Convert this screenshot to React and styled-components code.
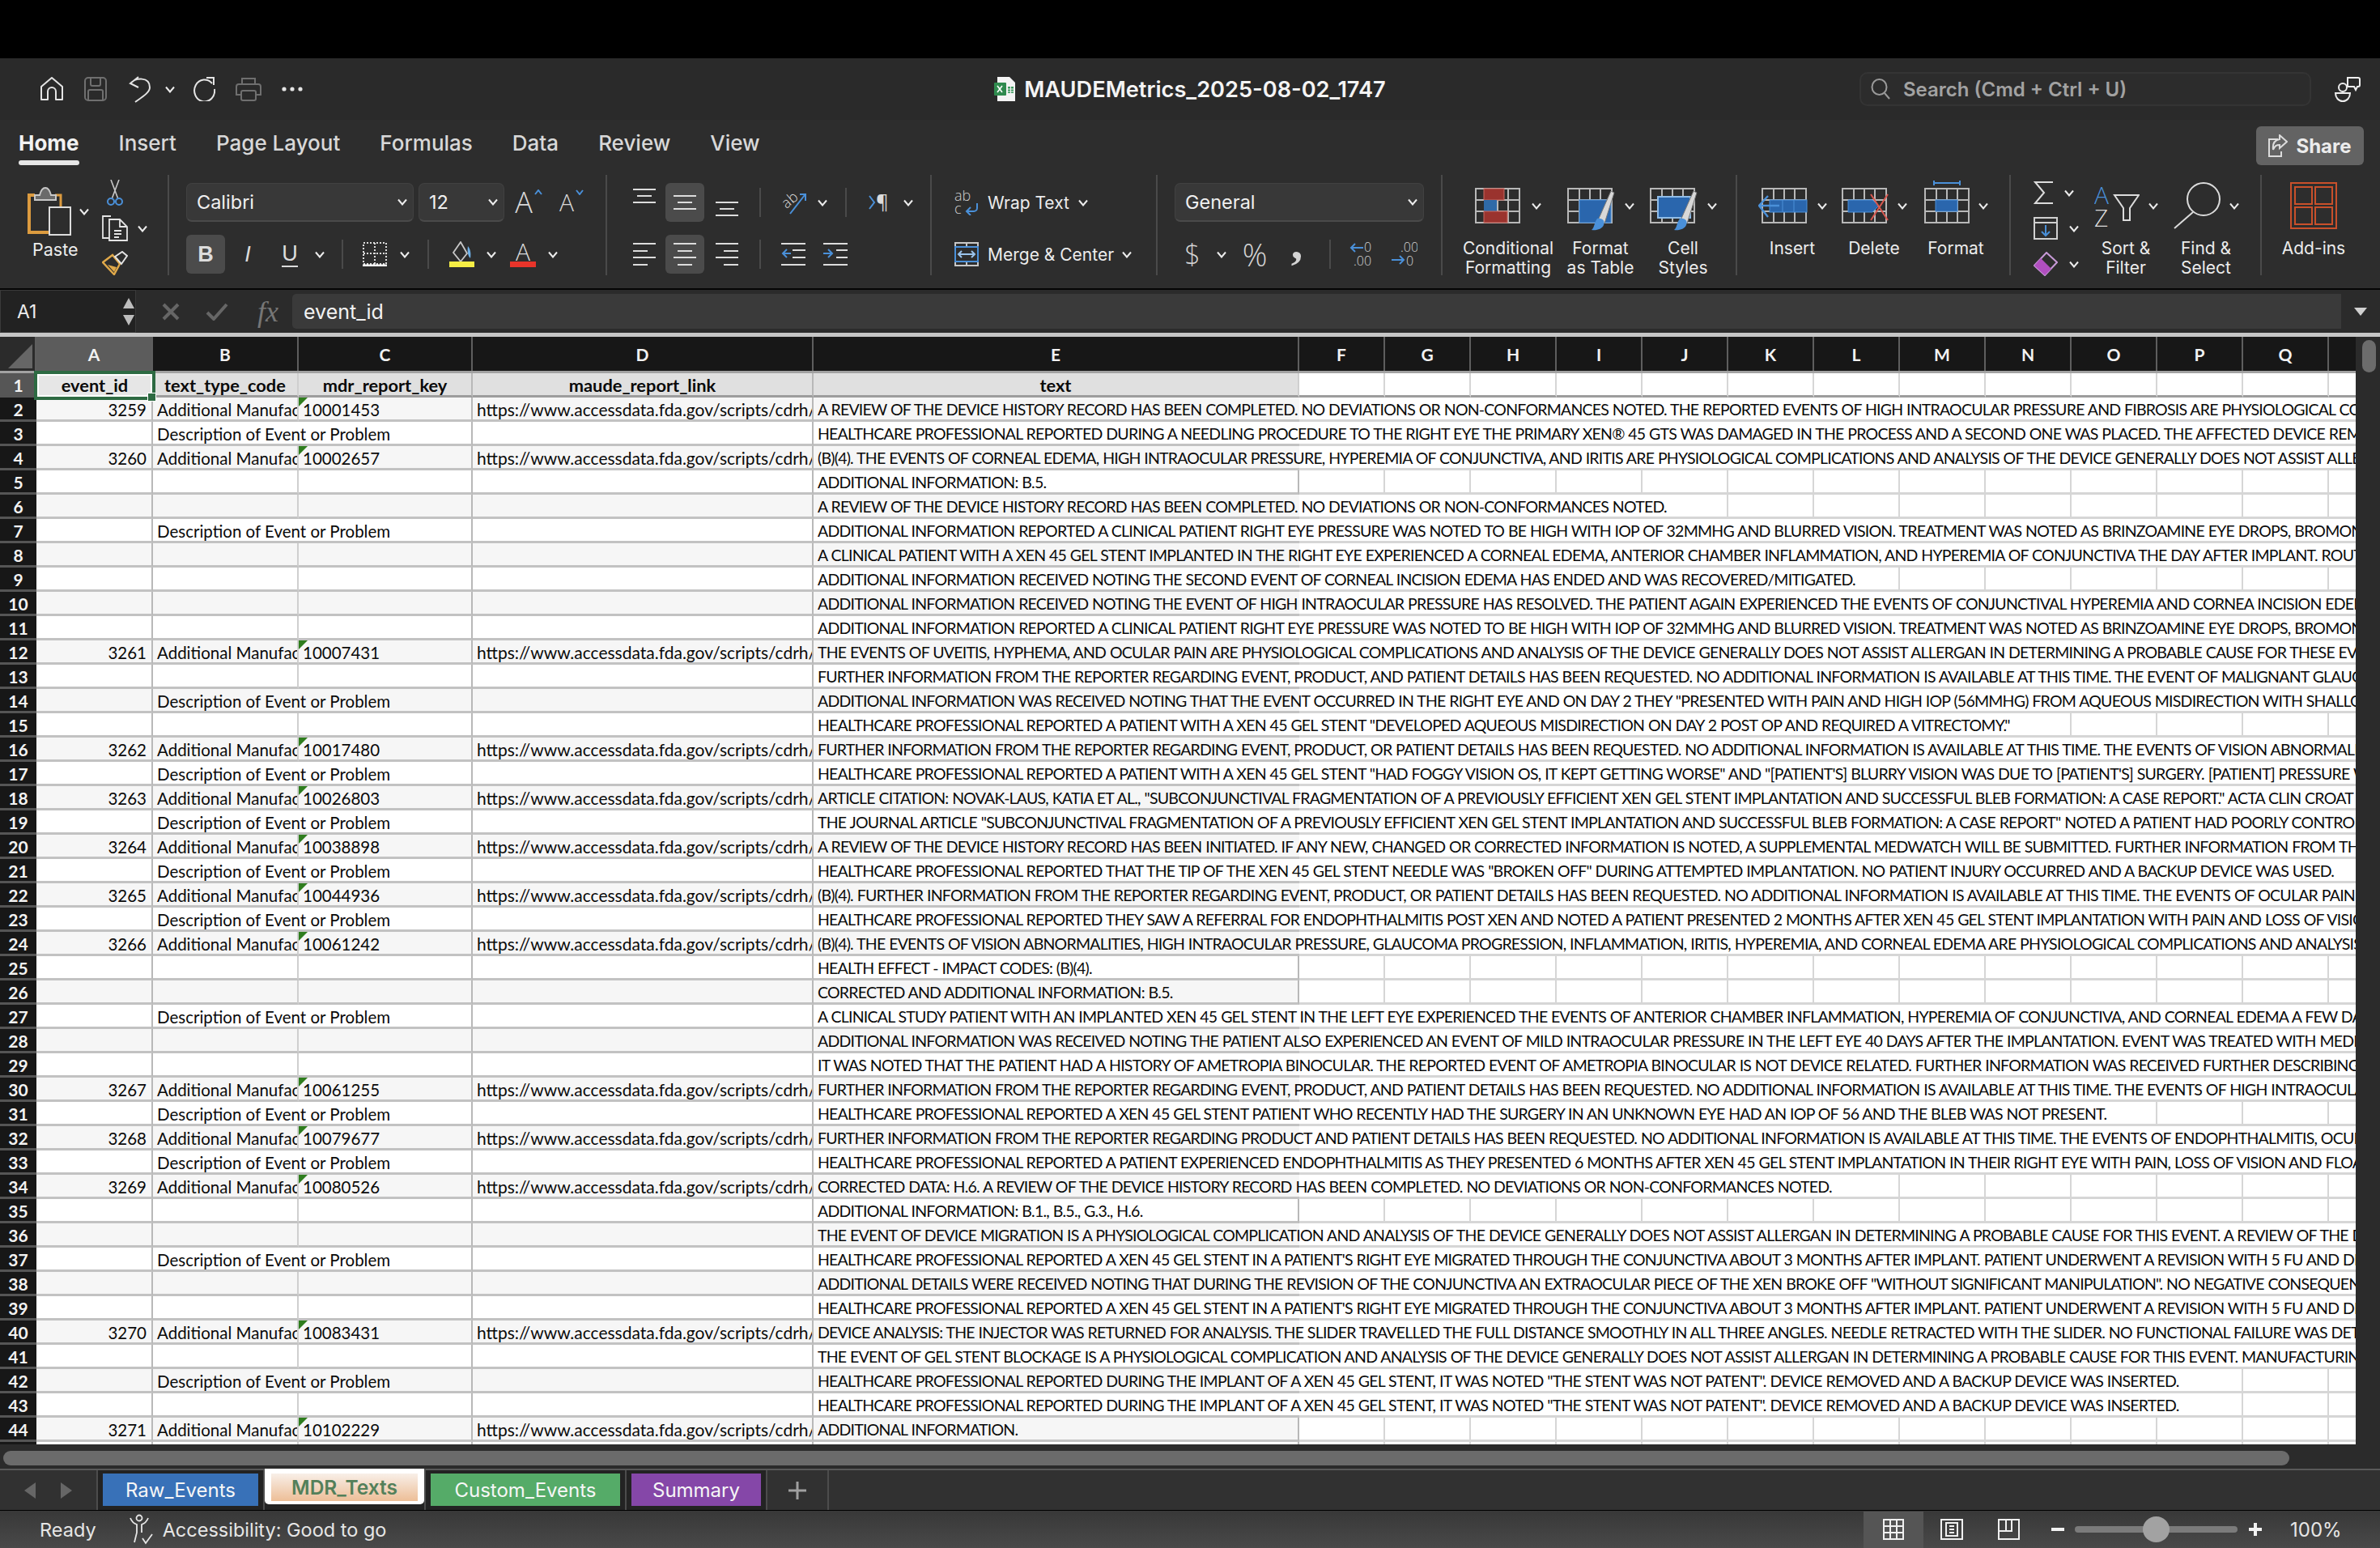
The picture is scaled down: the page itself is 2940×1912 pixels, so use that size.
import React from 'react';
import styled, { createGlobalStyle } from 'styled-components';

const GlobalStyle = createGlobalStyle`
  html, body { margin: 0; padding: 0; background: #000; }
  * { box-sizing: border-box; }
`;

const UI = `Inter, "Liberation Sans", sans-serif`;
const SHEET = `Lato, "Open Sans", sans-serif`;

const Page = styled.div`
  width: 2940px;
  height: 1912px;
  display: flex;
  flex-direction: column;
  overflow: hidden;
  background: #2b2b2b;
  font-family: ${UI};
  color: #f0f0f0;
`;

const BlackBand = styled.div`
  height: 72px;
  background: #000;
  flex-shrink: 0;
`;

const TitleBar = styled.header`
  height: 76px;
  flex-shrink: 0;
  background: #2a2a2a;
  display: grid;
  grid-template-columns: 1fr auto 1fr;
  align-items: center;
  padding: 0 24px;
`;

const QuickTools = styled.div`
  display: flex;
  align-items: center;
  padding-left: 26px;
`;

const QuickSlot = styled.div`
  width: ${p => p.$w}px;
  display: flex;
  align-items: center;
`;

const DocTitle = styled.div`
  display: flex;
  align-items: center;
  gap: 11px;
  font-size: 27.200px;
  font-weight: 600;
  color: #f4f4f4;
  white-space: nowrap;
`;

const SearchArea = styled.div`
  display: flex;
  justify-content: flex-end;
  align-items: center;
  gap: 29px;
`;

const SearchBox = styled.div`
  width: 558px;
  height: 42px;
  border: 2px solid #343434;
  border-radius: 10px;
  background: #2c2c2c;
  display: flex;
  align-items: center;
  gap: 16px;
  padding-left: 12px;
  font-size: 24px;
  font-weight: 600;
  color: #a2a2a2;
`;

const Ribbon = styled.section`
  height: 208px;
  flex-shrink: 0;
  background: #2d2d2d;
`;

const RibbonTabs = styled.nav`
  height: 68px;
  display: flex;
  justify-content: space-between;
  padding: 8px 20px 0 23px;
`;

const TabList = styled.div`
  display: flex;
  gap: 49px;
`;

const RibbonTab = styled.div`
  position: relative;
  height: 48px;
  padding-top: 6px;
  font-size: 26px;
  line-height: 30px;
  font-weight: ${p => (p.$active ? 700 : 500)};
  color: ${p => (p.$active ? '#f2f2f2' : '#d8d8d8')};
  white-space: nowrap;
  &::after {
    content: '';
    display: ${p => (p.$active ? 'block' : 'none')};
    position: absolute;
    left: 0;
    right: 0;
    bottom: 0;
    height: 6px;
    border-radius: 3px;
    background: #e6e6e6;
  }
`;

const ShareButton = styled.button`
  width: 133px;
  height: 48px;
  border: none;
  border-radius: 6px;
  background: #636363;
  color: #ececec;
  font: 700 24px ${UI};
  display: flex;
  align-items: center;
  justify-content: center;
  gap: 10px;
`;

const ToolStrip = styled.div`
  display: flex;
  height: 124px;
`;

const Group = styled.div`
  width: ${p => p.$w}px;
  flex-shrink: 0;
  height: 124px;
  padding-left: ${p => p.$pad}px;
  display: flex;
  border-right: ${p => (p.$last ? 'none' : '2px solid #4a4a4a')};
`;

const Stack = styled.div`
  display: flex;
  flex-direction: column;
  gap: 16px;
  padding-top: 10px;
`;

const ToolRow = styled.div`
  display: flex;
  align-items: center;
  height: 48px;
`;

const Tool = styled.div`
  width: ${p => p.$w}px;
  height: 48px;
  flex-shrink: 0;
  display: flex;
  align-items: center;
  justify-content: center;
  border-radius: 6px;
  background: ${p => (p.$active ? '#4b4b4b' : 'transparent')};
`;

const VSep = styled.div`
  width: ${p => p.$w}px;
  height: 36px;
  flex-shrink: 0;
  display: flex;
  justify-content: center;
  &::before {
    content: '';
    width: 2px;
    background: #4a4a4a;
  }
`;

const PasteBlock = styled.div`
  width: 96px;
  display: flex;
  flex-direction: column;
  align-items: flex-start;
`;

const PasteTop = styled.div`
  display: flex;
  align-items: center;
  gap: 10px;
  height: 70px;
  margin-top: 10px;
`;

const PasteLabel = styled.div`
  margin: 0 0 0 6px;
  font-size: 21.500px;
  line-height: 24px;
  color: #ececec;
`;

const MiniColumn = styled.div`
  display: flex;
  flex-direction: column;
  align-items: flex-start;
  gap: 12px;
  padding-top: 6px;
  margin-left: -4px;
`;

const MiniRow = styled.div`
  display: flex;
  align-items: center;
  gap: 12px;
  height: 32px;
  padding-left: ${p => p.$inset || 0}px;
`;

const Select = styled.div`
  width: ${p => p.$w}px;
  height: 48px;
  flex-shrink: 0;
  margin-right: ${p => p.$gap || 0}px;
  padding: 0 7px 0 12px;
  border-radius: 7px;
  background: #383838;
  border: 1px solid #414141;
  border-bottom: 2px solid #4a4a4a;
  display: flex;
  align-items: center;
  justify-content: space-between;
  font-size: 23.500px;
  color: #f0f0f0;
`;

const LetterA = styled.span`
  font: 300 ${p => p.$size}px "Open Sans", sans-serif;
  color: #d8d8d8;
  line-height: 1;
`;

const CaretSlot = styled.span`
  align-self: flex-start;
  margin: 8px 0 0 2px;
`;

const StyleLetter = styled.span`
  font-family: "Liberation Sans", sans-serif;
  font-size: 27px;
  font-weight: ${p => (p.$bold ? 700 : 300)};
  font-style: ${p => (p.$italic ? 'italic' : 'normal')};
  color: #dcdcdc;
  border-bottom: ${p => (p.$under ? '2px solid #dcdcdc' : 'none')};
  line-height: 30px;
`;

const NumberGlyph = styled.span`
  font-family: "Open Sans", sans-serif;
  font-size: ${p => p.$size}px;
  font-weight: 300;
  color: #d4d4d4;
`;

const CommaGlyph = styled.span`
  font: 700 58px "Liberation Serif", serif;
  line-height: 48px;
  color: #d4d4d4;
  transform: translateY(-14px);
`;

const WideLabel = styled.span`
  font-size: 21px;
  color: #ececec;
  white-space: nowrap;
  margin: 0 ${p => p.$after}px 0 4px;
`;

const BigTool = styled.div`
  width: ${p => p.$w}px;
  flex-shrink: 0;
  display: flex;
  flex-direction: column;
  align-items: center;
`;

const BigIconRow = styled.div`
  height: 76px;
  flex-shrink: 0;
  display: flex;
  align-items: center;
  gap: ${p => p.$gap || 11}px;
`;

const BigLabel = styled.div`
  font-size: 21px;
  line-height: 24px;
  margin-top: 3px;
  flex-shrink: 0;
  color: #ececec;
  text-align: center;
  white-space: nowrap;
`;

const EditColumn = styled.div`
  width: 70px;
  flex-shrink: 0;
  display: flex;
  flex-direction: column;
  padding: 8px 0 0 6px;
  gap: 16px;
`;

const EditRow = styled.div`
  display: flex;
  align-items: center;
  gap: 14px;
  height: 28px;
`;

const FormulaBar = styled.div`
  height: 60px;
  flex-shrink: 0;
  border-top: 2px solid #050505;
  border-bottom: 5px solid #c6c6c6;
  background: #2b2b2b;
  display: flex;
  align-items: stretch;
`;

const NameBox = styled.div`
  width: 168px;
  background: #222;
  border: 1px solid #3a3a3a;
  display: flex;
  align-items: center;
  justify-content: space-between;
  padding: 0 0 0 20px;
  font-size: 23px;
  color: #ececec;
`;

const FormulaActions = styled.div`
  width: 193px;
  display: flex;
  align-items: center;
  padding-left: 32px;
  gap: 32px;
`;

const FxMark = styled.span`
  font: italic 36px "Liberation Serif", serif;
  color: #767676;
  margin-left: 4px;
`;

const FormulaInput = styled.div`
  flex: 1;
  margin: 5px 0;
  background: #3a3a3a;
  border-radius: 5px 0 0 5px;
  display: flex;
  align-items: center;
  padding-left: 14px;
  font: 400 25px ${UI};
  color: #f2f2f2;
`;

const FormulaEnd = styled.div`
  width: 48px;
  display: flex;
  align-items: center;
  justify-content: center;
`;

const SheetArea = styled.div`
  height: 1368px;
  flex-shrink: 0;
  display: flex;
  background: #2b2b2b;
`;

const Sheet = styled.div`
  width: 2910px;
  overflow: hidden;
  background: #fff;
  font-family: ${SHEET};
  font-size: 20.500px;
  color: #0a0a0a;
`;

const HeaderRow = styled.div`
  display: flex;
  height: 45px;
  background: #171717;
  border-bottom: 3px solid #a2a2a2;
`;

const ColHead = styled.div`
  width: ${p => p.$w}px;
  flex-shrink: 0;
  display: flex;
  align-items: center;
  justify-content: center;
  background: ${p => (p.$selected ? '#5c5c5c' : '#171717')};
  border-right: 2px solid #5e5e5e;
  color: #f2f2f2;
  font-weight: 700;
  font-size: 21px;
`;

const Corner = styled.div`
  width: 45px;
  flex-shrink: 0;
  background: #2b2b2b;
  border-right: 2px solid #5e5e5e;
  display: flex;
  align-items: flex-end;
  justify-content: flex-end;
  padding: 0 3px 3px 0;
`;

const Row = styled.div`
  display: flex;
  height: 30px;
`;

const RowHead = styled.div`
  width: 45px;
  flex-shrink: 0;
  display: flex;
  align-items: center;
  justify-content: center;
  background: ${p => (p.$selected ? '#565656' : '#171717')};
  border-bottom: 3px solid #555;
  color: #f2f2f2;
  font-weight: 700;
  font-size: 21px;
  padding-top: 2px;
`;

const Cell = styled.div`
  position: relative;
  width: ${p => p.$w}px;
  flex-shrink: 0;
  padding: 0 ${p => (p.$num ? 6 : 5)}px 0 ${p => (p.$num ? 0 : 5)}px;
  line-height: 30px;
  white-space: nowrap;
  text-align: ${p => (p.$num ? 'right' : 'left')};
  overflow: ${p => (p.$clip ? 'hidden' : 'visible')};
  z-index: ${p => (p.$over ? 1 : 0)};
  background: ${p => (p.$band ? '#f6f6f6' : '#fff')};
  border-bottom: 3px solid #c2c2c2;
  border-right: ${p => (p.$line ? `2px solid ${p.$soft ? '#cfcfcf' : '#b8b8b8'}` : '0 none')};
`;

const Flagged = styled(Cell)`
  &::before {
    content: '';
    position: absolute;
    left: 0;
    top: 0;
    border-top: 11px solid #2f7d1e;
    border-right: 11px solid transparent;
  }
`;

const LinkCell = styled(Cell)`
  font-size: 21px;
`;

const TextCell = styled(Cell)`
  font-size: 19.500px;
  letter-spacing: -0.77px;
  word-spacing: 0.5px;
`;

const HeadCell = styled(Cell)`
  background: #e0e0e0;
  font-size: 21.800px;
  font-weight: 700;
  text-align: center;
  padding: 0;
  border-bottom-color: #9d9d9d;
`;

const ActiveCell = styled(HeadCell)`
  z-index: 3;
  background: #e6e6e6;
  border: none;
  outline: 4px solid #2d6a42;
  outline-offset: -1px;
  box-shadow: inset 0 0 0 3px #fff;
  &::after {
    content: '';
    position: absolute;
    right: -4px;
    bottom: -5px;
    width: 9px;
    height: 9px;
    background: #2d6a42;
    border: 1px solid #fff;
  }
`;

const BlankCell = styled.div`
  width: 106px;
  flex-shrink: 0;
  background: #fff;
  border-bottom: 3px solid ${p => (p.$first ? '#9d9d9d' : '#d6d6d6')};
  border-right: ${p => (p.$line ? '2px solid #d6d6d6' : '0 none')};
`;

const VScroll = styled.div`
  width: 30px;
  padding: 4px 5px 0 8px;
`;

const VThumb = styled.div`
  height: 40px;
  border-radius: 9px;
  background: #6c6c6c;
`;

const HScroll = styled.div`
  height: 30px;
  flex-shrink: 0;
  padding: 8px 0 0 4px;
  background: #2b2b2b;
`;

const HThumb = styled.div`
  width: 2824px;
  height: 18px;
  border-radius: 9px;
  background: #6b6b6b;
`;

const SheetTabs = styled.div`
  height: 52px;
  flex-shrink: 0;
  display: flex;
  background: #313131;
  border-top: 2px solid #595959;
  border-bottom: 1px solid #000;
`;

const NavArrows = styled.div`
  width: 121px;
  display: flex;
  align-items: center;
  gap: 31px;
  padding-left: 30px;
  border-right: 2px solid #4c4c4c;
`;

const TabSlot = styled.div`
  height: ${p => (p.$active ? 51 : 49)}px;
  margin-top: ${p => (p.$active ? -2 : 0)}px;
  padding: ${p => (p.$active ? '0' : '4px 6px 0')};
  background: #232323;
  border-right: 2px solid #4c4c4c;
`;

const SheetTab = styled.div`
  width: ${p => p.$w}px;
  height: 40px;
  display: flex;
  align-items: center;
  justify-content: center;
  background: ${p => p.$bg};
  color: #f6f6f6;
  font-size: 24px;
`;

const ActiveTab = styled.div`
  width: 197px;
  height: 44px;
  padding: 6px 8px 4px;
  background: #fff;
  border-radius: 0 0 5px 5px;
`;

const ActiveTabFace = styled.div`
  height: 100%;
  display: flex;
  align-items: center;
  justify-content: center;
  background: linear-gradient(#f8efe8, #edbe97);
  color: #54805a;
  font-size: 24.500px;
  font-weight: 600;
`;

const AddSheet = styled.div`
  width: 76px;
  display: flex;
  align-items: center;
  justify-content: center;
  border-right: 2px solid #4c4c4c;
`;

const StatusBar = styled.footer`
  flex: 1;
  display: flex;
  align-items: center;
  justify-content: space-between;
  padding-left: 49px;
  background: linear-gradient(#383838, #494949);
  font-size: 23.500px;
  color: #e6e6e6;
`;

const StatusLeft = styled.div`
  display: flex;
  align-items: center;
`;

const StatusItem = styled.div`
  display: flex;
  align-items: center;
  gap: 10px;
  margin-left: ${p => p.$left || 0}px;
`;

const StatusRight = styled.div`
  display: flex;
  align-items: center;
  height: 45px;
  padding-right: 49px;
`;

const ViewButton = styled.div`
  width: ${p => p.$w}px;
  height: 45px;
  display: flex;
  align-items: center;
  justify-content: ${p => (p.$end ? 'flex-end' : 'center')};
  background: ${p => (p.$active ? '#555' : 'transparent')};
`;

const ZoomTrack = styled.div`
  position: relative;
  width: 201px;
  height: 8px;
  margin: 0 14px 0 13px;
  border-radius: 4px;
  background: #7b7b7b;
`;

const ZoomThumb = styled.div`
  position: absolute;
  left: 84px;
  top: -12px;
  width: 33px;
  height: 32px;
  border-radius: 50%;
  background: #a2a2a2;
`;

const ZoomValue = styled.div`
  width: 62px;
  margin-left: 35px;
  font-size: 24px;
  white-space: nowrap;
`;

const Icon = styled.svg`
  display: block;
  flex-shrink: 0;
`;

const Chev = () => (
  <Icon width="12" height="9" viewBox="0 0 12 9" fill="none" stroke="#ececec" strokeWidth="2">
    <path d="M1 1.500 6 7.500 11 1.500" />
  </Icon>
);

const W = '#e4e4e4';
const G = '#c8c8c8';
const BL = '#4a90d9';
const FILL = '#2a66ad';
const DIM = '#6f6f6f';

const Caret = ({ down }) => (
  <Icon width="10" height="7" viewBox="0 0 10 7" fill="none" stroke={BL} strokeWidth="2">
    <path d={down ? 'M1 1 5 6 9 1' : 'M1 6 5 1 9 6'} />
  </Icon>
);
const HomeIcon = () => (
  <Icon width="28" height="30" viewBox="0 0 28 30" fill="none" stroke={W} strokeWidth="2">
    <path d="M1 28V12L14 1l13 11v16h-8V18a5 5 0 0 0-10 0v10Z" strokeLinejoin="round" />
  </Icon>
);
const SaveIcon = () => (
  <Icon width="28" height="30" viewBox="0 0 28 30" fill="none" stroke={DIM} strokeWidth="2">
    <rect x="1" y="1" width="26" height="28" rx="4" />
    <path d="M8 1v8a2 2 0 0 0 2 2h8a2 2 0 0 0 2-2V1M5 29V18a2 2 0 0 1 2-2h14a2 2 0 0 1 2 2v11" />
  </Icon>
);
const UndoIcon = () => (
  <Icon width="28" height="33" viewBox="0 0 28 33" fill="none" stroke={W} strokeWidth="2">
    <path d="M12 1 2 9l10 5M2 9c6-7 24-9 24 5 0 6-8 11-18 18" />
  </Icon>
);
const RedoIcon = () => (
  <Icon width="28" height="30" viewBox="0 0 28 30" fill="none" stroke={W} strokeWidth="2">
    <path d="M24 8A12.500 13.500 0 1 0 27 15M17 1h9v9" />
  </Icon>
);
const PrintIcon = () => (
  <Icon width="32" height="30" viewBox="0 0 32 30" fill="none" stroke={DIM} strokeWidth="2">
    <path d="M8 9V2h16v7M6 22H1V12a3 3 0 0 1 3-3h24a3 3 0 0 1 3 3v10h-5" />
    <rect x="7" y="17" width="18" height="12" rx="2" />
  </Icon>
);
const MoreIcon = () => (
  <Icon width="26" height="6" viewBox="0 0 26 6" fill={W}>
    <circle cx="3" cy="3" r="2.600" />
    <circle cx="13" cy="3" r="2.600" />
    <circle cx="23" cy="3" r="2.600" />
  </Icon>
);
const ExcelIcon = () => (
  <Icon width="26" height="30" viewBox="0 0 26 30">
    <path d="M4 0h15l7 7v23H4Z" fill="#f4f4f4" />
    <rect x="0" y="7" width="15" height="16" rx="1" fill="#2f8a4e" />
    <path d="m4 11 6 8M10 11l-6 8" stroke="#fff" strokeWidth="1.600" />
    <path d="M17 12h7v8h-7Z" fill="#3d9a5e" />
    <path d="M17 15h7M17 18h7M20.500 12v8" stroke="#f4f4f4" strokeWidth="1" />
  </Icon>
);
const SearchIcon = () => (
  <Icon width="24" height="26" viewBox="0 0 24 26" fill="none" stroke="#9a9a9a" strokeWidth="2">
    <ellipse cx="10.500" cy="10.500" rx="9" ry="9.500" />
    <path d="m17 18 6 7" />
  </Icon>
);
const CollabIcon = () => (
  <Icon width="32" height="32" viewBox="0 0 32 32" fill="none" stroke="#eee" strokeWidth="2">
    <circle cx="10" cy="14" r="5" />
    <path d="M1 21h18c0 6-4 10-9 10s-9-4-9-10Z" />
    <path d="M16 2h13a2 2 0 0 1 2 2v7a2 2 0 0 1-2 2h-1l-2 4-2-4h-8Z" />
  </Icon>
);
const ShareIcon = () => (
  <Icon width="24" height="28" viewBox="0 0 24 28" fill="none" stroke="#dcdcdc" strokeWidth="2">
    <path d="M12 6H1v21h15v-6M23 9 14 1v5C8 7 5 11 6 19c2-5 4-6 8-6v4Z" />
  </Icon>
);
const PasteIcon = () => (
  <Icon width="54" height="60" viewBox="0 0 54 60" fill="none">
    <path d="M9 10H2v46h25" stroke="#dc9b3f" strokeWidth="4" />
    <path d="M34 10h7v14" stroke="#dc9b3f" strokeWidth="3" />
    <path d="M9 16v-6h6c1-4 3-9 7-9s6 5 7 9h6v6Z" fill="#6a6a6a" stroke="#c8c8c8" strokeWidth="2" />
    <rect x="27" y="25" width="26" height="34" stroke="#dcdcdc" strokeWidth="2" fill="#2d2d2d" />
  </Icon>
);
const CutIcon = () => (
  <Icon width="20" height="32" viewBox="0 0 20 32" fill="none">
    <path d="m15 0-9 24M5 0l9 24" stroke={G} strokeWidth="1.600" />
    <circle cx="5" cy="27" r="4" stroke={BL} strokeWidth="2" />
    <circle cx="15" cy="27" r="4" stroke={BL} strokeWidth="2" />
  </Icon>
);
const CopyIcon = () => (
  <Icon width="32" height="32" viewBox="0 0 32 32" fill="none" stroke={W} strokeWidth="1.800">
    <path d="M11 1H1v27h8" />
    <path d="M9 5h13l9 9v17H9Z" fill="#2d2d2d" />
    <path d="M22 5v9h9M15 19h9M15 23h9M15 27h6" />
  </Icon>
);
const PainterIcon = () => (
  <Icon width="32" height="30" viewBox="0 0 32 30">
    <path d="M1 14 13 5l9 11-7 13Z" fill="none" stroke="#e0a94a" strokeWidth="2.400" />
    <path d="M7 17 15 26l3-6Z" fill="#e0a94a" />
    <path d="m16 7 9-6 6 5-7 10Z" fill="#2d2d2d" stroke="#e4e4e4" strokeWidth="2" />
  </Icon>
);
const BorderIcon = () => (
  <Icon width="30" height="30" viewBox="0 0 30 30" fill="none">
    <path d="M1 1h28v26H1ZM15 1v26M1 14h28" stroke="#dcdcdc" strokeWidth="2" strokeDasharray="2 2" />
    <path d="M0 29h30" stroke="#fff" strokeWidth="3" />
  </Icon>
);
const FillIcon = () => (
  <Icon width="32" height="32" viewBox="0 0 32 32" fill="none">
    <path d="M5 14 14 1l8 14-8 10Z" stroke={G} strokeWidth="1.800" />
    <path d="M23 6c3 4 4 8 3 15-3-3-4-8-3-15Z" fill="#6fb1e8" />
    <rect y="25" x="0" width="31" height="7" fill="#f6ee45" />
  </Icon>
);
const ColorA = () => (
  <Icon width="32" height="32" viewBox="0 0 32 32">
    <text x="16" y="24" textAnchor="middle" fontFamily="Open Sans" fontWeight="300" fontSize="30" fill="#dcdcdc">A</text>
    <rect y="25" width="32" height="7" fill="#e8342a" />
  </Icon>
);
const Lines = ({ rows }) => (
  <Icon width="28" height="28" viewBox="0 0 28 28" stroke="#dcdcdc" strokeWidth="2" fill="none">
    {rows.map(([a, b, y]) => <path key={y} d={`M${a} ${y}H${b}`} />)}
  </Icon>
);
const AlignV = ({ at }) => (
  <Icon width="28" height="34" viewBox="0 0 28 34" stroke="#dcdcdc" strokeWidth="2" fill="none">
    <path d={`M0 ${at + 1}h28M5 ${at + 9}h18M0 ${at + 17}h28`} />
  </Icon>
);
const OrientIcon = () => (
  <Icon width="32" height="30" viewBox="0 0 32 30" fill="none">
    <text x="1" y="19" transform="rotate(-40 10 12)" fontFamily="Open Sans" fontWeight="300" fontSize="18" fill="#dcdcdc">ab</text>
    <path d="M12 29 30 6M24 5h7v8" stroke={BL} strokeWidth="2" />
  </Icon>
);
const Outdent = () => (
  <Icon width="30" height="28" viewBox="0 0 30 28" fill="none" strokeWidth="2">
    <path d="M0 1h30M14 9h16M14 18h16M0 27h30" stroke="#dcdcdc" />
    <path d="M12 13H2M7 8l-5 5 5 5" stroke={BL} />
  </Icon>
);
const Indent = () => (
  <Icon width="30" height="28" viewBox="0 0 30 28" fill="none" strokeWidth="2">
    <path d="M0 1h30M16 9h14M16 18h14M0 27h30" stroke="#dcdcdc" />
    <path d="M0 13h10M6 8l5 5-5 5" stroke={BL} />
  </Icon>
);
const RtlIcon = () => (
  <Icon width="26" height="30" viewBox="0 0 26 30" fill="none">
    <path d="m1 7 6 8-6 8" stroke={BL} strokeWidth="2" />
    <text x="9" y="23" fontFamily="Open Sans" fontSize="24" fill="#dcdcdc">¶</text>
  </Icon>
);
const WrapIcon = () => (
  <Icon width="30" height="31" viewBox="0 0 30 31" fill="none">
    <text x="0" y="13" fontFamily="Open Sans" fontWeight="300" fontSize="18" fill="#cfcfcf">ab</text>
    <text x="0" y="29" fontFamily="Open Sans" fontWeight="300" fontSize="18" fill="#cfcfcf">c</text>
    <path d="M28 16v6a4 4 0 0 1-4 4h-9M20 21l-5 5 5 5" stroke={BL} strokeWidth="2" />
  </Icon>
);
const MergeIcon = () => (
  <Icon width="30" height="30" viewBox="0 0 30 30" fill="none" strokeWidth="2">
    <path d="M1 6V1h28v5M1 24v5h28v-5M15 1v5M15 24v5" stroke={G} />
    <rect x="1" y="6" width="28" height="18" stroke={BL} />
    <path d="M5 15h20M9 11l-4 4 4 4M21 11l4 4-4 4" stroke="#9bc4ec" />
  </Icon>
);
const DecIcon = ({ more }) => (
  <Icon width="32" height="32" viewBox="0 0 32 32" fill="none">
    <text x={more ? 11 : 18} y="13" fontFamily="Open Sans" fontWeight="300" fontSize="16" fill="#d4d4d4">{more ? '.00' : '0'}</text>
    <text x={more ? 18 : 5} y="30" fontFamily="Open Sans" fontWeight="300" fontSize="16" fill="#d4d4d4">{more ? '0' : '.00'}</text>
    {more
      ? <path d="M0 23h15M10 18l5 5-5 5" stroke={BL} strokeWidth="2" />
      : <path d="M17 8H2M7 3 2 8l5 5" stroke={BL} strokeWidth="2" />}
  </Icon>
);
const GridBase = () => (
  <path d="M1 1h54v42H1ZM1 15h54M1 29h54M15 1v42M28 1v42M41 1v42" stroke="#b8b8b8" strokeWidth="2" fill="none" />
);
const CondIcon = () => (
  <Icon width="56" height="44" viewBox="0 0 56 44" fill="none">
    <GridBase />
    <rect x="11" y="1" width="25" height="14" fill="#9a332e" stroke="#c96a60" />
    <rect x="11" y="15" width="16" height="14" fill="#2f6aa8" />
    <rect x="11" y="29" width="29" height="14" fill="#9a332e" stroke="#c96a60" />
  </Icon>
);
const Brush = ({ x }) => (
  <g transform={`translate(${x} 0)`}>
    <path d="M24 40 40 4l4 2-12 38Z" fill="#d8d8d8" stroke="#777" strokeWidth="1" />
    <path d="M23 38c7-1 10 3 8 8-2 5-9 7-15 6 4-3 3-9 7-14Z" fill="#4a90d9" />
  </g>
);
const TableIcon = () => (
  <Icon width="60" height="64" viewBox="0 -10 60 64" fill="none">
    <GridBase />
    <rect x="15" y="15" width="39" height="28" fill={FILL} stroke="#4a90d9" />
    <Brush x="14" />
  </Icon>
);
const CellIcon = () => (
  <Icon width="60" height="64" viewBox="0 -10 60 64" fill="none">
    <GridBase />
    <rect x="10" y="11" width="40" height="26" fill={FILL} stroke="#8fbce8" strokeWidth="2" />
    <Brush x="14" />
  </Icon>
);
const InsertIcon = () => (
  <Icon width="62" height="44" viewBox="0 0 62 44" fill="none">
    <g transform="translate(4 0)"><GridBase /></g>
    <rect x="14" y="15" width="46" height="15" fill={FILL} stroke={BL} />
    <path d="M26 22H2M12 10 1 22l11 14" stroke={BL} strokeWidth="2.400" />
    <path d="M30 15v15M44 15v15" stroke={BL} />
  </Icon>
);
const DeleteIcon = () => (
  <Icon width="58" height="44" viewBox="0 0 58 44" fill="none">
    <GridBase />
    <path d="M8 15h30l8 7-8 8H8Z" fill={FILL} stroke={BL} />
    <path d="m36 8 21 32M57 8 36 40" stroke="#d9584f" strokeWidth="2" />
  </Icon>
);
const FormatIcon = () => (
  <Icon width="56" height="64" viewBox="0 0 56 64" fill="none">
    <path d="M12 1v6M44 1v6M12 4h32" stroke={BL} strokeWidth="2" />
    <g transform="translate(0 10)">
      <GridBase />
      <rect x="14" y="15" width="27" height="14" fill={FILL} stroke={BL} />
    </g>
  </Icon>
);
const SigmaIcon = () => (
  <Icon width="24" height="28" viewBox="0 0 24 28" fill="none" stroke="#dcdcdc" strokeWidth="2">
    <path d="M24 1H2l11 13L2 27h22" />
  </Icon>
);
const FillDownIcon = () => (
  <Icon width="30" height="28" viewBox="0 0 30 28" fill="none" strokeWidth="2">
    <path d="M1 1h28v26H1Z" stroke="#d0d0d0" />
    <path d="M1 7h28" stroke="#d0d0d0" />
    <path d="M15 10v13M10 18l5 5 5-5" stroke={BL} />
  </Icon>
);
const ClearIcon = () => (
  <Icon width="30" height="30" viewBox="0 0 30 30" fill="none">
    <path d="M16 1 29 13 14 29 1 17Z" stroke="#c89ad8" strokeWidth="2" />
    <path d="M1 17 9 8l13 13-8 8Z" fill="#b14fc0" />
  </Icon>
);
const SortIcon = () => (
  <Icon width="56" height="52" viewBox="0 0 56 52" fill="none">
    <text x="0" y="24" fontFamily="Open Sans" fontWeight="300" fontSize="30" fill={BL}>A</text>
    <text x="0" y="52" fontFamily="Open Sans" fontWeight="300" fontSize="30" fill="#dcdcdc">Z</text>
    <path d="M25 13h30L44 29v15h-8V29Z" stroke="#dcdcdc" strokeWidth="2" />
  </Icon>
);
const FindIcon = () => (
  <Icon width="58" height="58" viewBox="0 0 58 58" fill="none" stroke="#dcdcdc" strokeWidth="2">
    <circle cx="37" cy="21" r="20" />
    <path d="M24 37 1 57" />
  </Icon>
);
const AddinsIcon = () => (
  <Icon width="58" height="58" viewBox="0 0 58 58" fill="none" stroke="#c9502b" strokeWidth="2">
    <rect x="1" y="1" width="56" height="56" />
    <rect x="6" y="6" width="21" height="21" />
    <rect x="31" y="6" width="21" height="21" />
    <rect x="6" y="31" width="21" height="21" />
    <rect x="31" y="31" width="21" height="21" />
  </Icon>
);
const StepArrows = () => (
  <Icon width="16" height="36" viewBox="0 0 16 36" fill="#bdbdbd">
    <path d="M8 1 15 14H1ZM8 35 1 22h14Z" />
  </Icon>
);
const CrossIcon = () => (
  <Icon width="22" height="22" viewBox="0 0 22 22" stroke="#666" strokeWidth="4">
    <path d="m2 2 18 18M20 2 2 20" />
  </Icon>
);
const CheckIcon = () => (
  <Icon width="28" height="22" viewBox="0 0 28 22" fill="none" stroke="#666" strokeWidth="4">
    <path d="m2 12 8 8L26 2" />
  </Icon>
);
const CornerMark = () => (
  <Icon width="30" height="30" viewBox="0 0 30 30" fill="#666">
    <path d="M30 0v30H0Z" />
  </Icon>
);
const NavArrow = ({ right }) => (
  <Icon width="14" height="20" viewBox="0 0 14 20" fill="#666">
    <path d={right ? 'M0 0l14 10L0 20Z' : 'M14 0 0 10l14 10Z'} />
  </Icon>
);
const NavArrowDown = () => (
  <Icon width="16" height="10" viewBox="0 0 16 10" fill="#d0d0d0">
    <path d="M0 0h16L8 10Z" />
  </Icon>
);
const PlusIcon = () => (
  <Icon width="22" height="22" viewBox="0 0 22 22" stroke="#a0a0a0" strokeWidth="3">
    <path d="M11 0v22M0 11h22" />
  </Icon>
);
const A11yIcon = () => (
  <Icon width="32" height="38" viewBox="0 0 32 38" fill="none" stroke="#e6e6e6" strokeWidth="1.800">
    <circle cx="13" cy="5" r="3.500" />
    <path d="M2 5c2 5 5 7 8 8v10l-3 12M24 5c-2 5-5 7-8 8v10M17 30l4 6 8-11" />
  </Icon>
);
const NormalView = () => (
  <Icon width="26" height="26" viewBox="0 0 26 26" fill="none" stroke="#f0f0f0" strokeWidth="2">
    <path d="M1 1h24v24H1ZM9 1v24M17 1v24M1 9h24M1 17h24" />
  </Icon>
);
const PageView = () => (
  <Icon width="28" height="26" viewBox="0 0 28 26" fill="none" stroke="#f0f0f0" strokeWidth="2">
    <path d="M1 1h26v24H1ZM7 5h14v16H7ZM11 9h6M11 13h6M11 17h6" />
  </Icon>
);
const BreakView = () => (
  <Icon width="27" height="26" viewBox="0 0 27 26" fill="none" stroke="#f0f0f0" strokeWidth="2">
    <path d="M1 1h25v24H1ZM1 15h16V1M10 1v14" />
  </Icon>
);
const MinusIcon = () => (
  <Icon width="16" height="4" viewBox="0 0 16 4" fill="#f2f2f2"><rect width="16" height="4" /></Icon>
);
const ZoomPlus = () => (
  <Icon width="16" height="16" viewBox="0 0 16 16" fill="#f2f2f2"><path d="M6 0h4v6h6v4h-6v6H6v-6H0V6h6Z" /></Icon>
);

const COLS = [144, 180, 215, 421, 600];
const EXTRA = 'FGHIJKLMNOPQR'.split('');
const IDS = {
  2: [3259, '10001453'], 4: [3260, '10002657'], 12: [3261, '10007431'], 16: [3262, '10017480'],
  18: [3263, '10026803'], 20: [3264, '10038898'], 22: [3265, '10044936'], 24: [3266, '10061242'],
  30: [3267, '10061255'], 32: [3268, '10079677'], 34: [3269, '10080526'], 40: [3270, '10083431'],
  44: [3271, '10102229'],
};
const DESC = [3, 7, 14, 17, 19, 21, 23, 27, 31, 33, 37, 42];
const COVER = { 5: 0, 6: 5, 9: 7, 15: 9, 25: 0, 26: 0, 31: 10, 34: 7, 35: 0, 42: 11, 43: 11, 44: 0, 45: 0 };

const HIGH_IOP = 'ADDITIONAL INFORMATION REPORTED A CLINICAL PATIENT RIGHT EYE PRESSURE WAS NOTED TO BE HIGH WITH IOP OF 32MMHG AND BLURRED VISION. TREATMENT WAS NOTED AS BRINZOAMINE EYE DROPS, BROMONIDINE EYE DROPS';
const MIGRATED = "HEALTHCARE PROFESSIONAL REPORTED A XEN 45 GEL STENT IN A PATIENT'S RIGHT EYE MIGRATED THROUGH THE CONJUNCTIVA ABOUT 3 MONTHS AFTER IMPLANT. PATIENT UNDERWENT A REVISION WITH 5 FU AND DEVICE REMOVAL";
const NOT_PATENT = 'HEALTHCARE PROFESSIONAL REPORTED DURING THE IMPLANT OF A XEN 45 GEL STENT, IT WAS NOTED "THE STENT WAS NOT PATENT". DEVICE REMOVED AND A BACKUP DEVICE WAS INSERTED.';

const TEXTS = {
  2: 'A REVIEW OF THE DEVICE HISTORY RECORD HAS BEEN COMPLETED. NO DEVIATIONS OR NON-CONFORMANCES NOTED. THE REPORTED EVENTS OF HIGH INTRAOCULAR PRESSURE AND FIBROSIS ARE PHYSIOLOGICAL COMPLICATIONS AND',
  3: 'HEALTHCARE PROFESSIONAL REPORTED DURING A NEEDLING PROCEDURE TO THE RIGHT EYE THE PRIMARY XEN® 45 GTS WAS DAMAGED IN THE PROCESS AND A SECOND ONE WAS PLACED. THE AFFECTED DEVICE REMAINS IN',
  4: '(B)(4). THE EVENTS OF CORNEAL EDEMA, HIGH INTRAOCULAR PRESSURE, HYPEREMIA OF CONJUNCTIVA, AND IRITIS ARE PHYSIOLOGICAL COMPLICATIONS AND ANALYSIS OF THE DEVICE GENERALLY DOES NOT ASSIST ALLERGAN IN',
  5: 'ADDITIONAL INFORMATION: B.5.',
  6: 'A REVIEW OF THE DEVICE HISTORY RECORD HAS BEEN COMPLETED. NO DEVIATIONS OR NON-CONFORMANCES NOTED.',
  7: HIGH_IOP,
  8: 'A CLINICAL PATIENT WITH A XEN 45 GEL STENT IMPLANTED IN THE RIGHT EYE EXPERIENCED A CORNEAL EDEMA, ANTERIOR CHAMBER INFLAMMATION, AND HYPEREMIA OF CONJUNCTIVA THE DAY AFTER IMPLANT. ROUTINE POST',
  9: 'ADDITIONAL INFORMATION RECEIVED NOTING THE SECOND EVENT OF CORNEAL INCISION EDEMA HAS ENDED AND WAS RECOVERED/MITIGATED.',
  10: 'ADDITIONAL INFORMATION RECEIVED NOTING THE EVENT OF HIGH INTRAOCULAR PRESSURE HAS RESOLVED. THE PATIENT AGAIN EXPERIENCED THE EVENTS OF CONJUNCTIVAL HYPEREMIA AND CORNEA INCISION EDEMA THAT',
  11: HIGH_IOP,
  12: 'THE EVENTS OF UVEITIS, HYPHEMA, AND OCULAR PAIN ARE PHYSIOLOGICAL COMPLICATIONS AND ANALYSIS OF THE DEVICE GENERALLY DOES NOT ASSIST ALLERGAN IN DETERMINING A PROBABLE CAUSE FOR THESE EVENTS.',
  13: 'FURTHER INFORMATION FROM THE REPORTER REGARDING EVENT, PRODUCT, AND PATIENT DETAILS HAS BEEN REQUESTED. NO ADDITIONAL INFORMATION IS AVAILABLE AT THIS TIME. THE EVENT OF MALIGNANT GLAUCOMA IS A',
  14: 'ADDITIONAL INFORMATION WAS RECEIVED NOTING THAT THE EVENT OCCURRED IN THE RIGHT EYE AND ON DAY 2 THEY "PRESENTED WITH PAIN AND HIGH IOP (56MMHG) FROM AQUEOUS MISDIRECTION WITH SHALLOW ANTERIOR',
  15: 'HEALTHCARE PROFESSIONAL REPORTED A PATIENT WITH A XEN 45 GEL STENT "DEVELOPED AQUEOUS MISDIRECTION ON DAY 2 POST OP AND REQUIRED A VITRECTOMY."',
  16: 'FURTHER INFORMATION FROM THE REPORTER REGARDING EVENT, PRODUCT, OR PATIENT DETAILS HAS BEEN REQUESTED. NO ADDITIONAL INFORMATION IS AVAILABLE AT THIS TIME. THE EVENTS OF VISION ABNORMALITIES AND',
  17: 'HEALTHCARE PROFESSIONAL REPORTED A PATIENT WITH A XEN 45 GEL STENT "HAD FOGGY VISION OS, IT KEPT GETTING WORSE" AND "[PATIENT\'S] BLURRY VISION WAS DUE TO [PATIENT\'S] SURGERY. [PATIENT] PRESSURE WAS',
  18: 'ARTICLE CITATION: NOVAK-LAUS, KATIA ET AL., "SUBCONJUNCTIVAL FRAGMENTATION OF A PREVIOUSLY EFFICIENT XEN GEL STENT IMPLANTATION AND SUCCESSFUL BLEB FORMATION: A CASE REPORT." ACTA CLIN CROAT 2022',
  19: 'THE JOURNAL ARTICLE "SUBCONJUNCTIVAL FRAGMENTATION OF A PREVIOUSLY EFFICIENT XEN GEL STENT IMPLANTATION AND SUCCESSFUL BLEB FORMATION: A CASE REPORT" NOTED A PATIENT HAD POORLY CONTROLLED',
  20: 'A REVIEW OF THE DEVICE HISTORY RECORD HAS BEEN INITIATED. IF ANY NEW, CHANGED OR CORRECTED INFORMATION IS NOTED, A SUPPLEMENTAL MEDWATCH WILL BE SUBMITTED. FURTHER INFORMATION FROM THE REPORTER',
  21: 'HEALTHCARE PROFESSIONAL REPORTED THAT THE TIP OF THE XEN 45 GEL STENT NEEDLE WAS "BROKEN OFF" DURING ATTEMPTED IMPLANTATION. NO PATIENT INJURY OCCURRED AND A BACKUP DEVICE WAS USED.',
  22: '(B)(4). FURTHER INFORMATION FROM THE REPORTER REGARDING EVENT, PRODUCT, OR PATIENT DETAILS HAS BEEN REQUESTED. NO ADDITIONAL INFORMATION IS AVAILABLE AT THIS TIME. THE EVENTS OF OCULAR PAIN AND',
  23: 'HEALTHCARE PROFESSIONAL REPORTED THEY SAW A REFERRAL FOR ENDOPHTHALMITIS POST XEN AND NOTED A PATIENT PRESENTED 2 MONTHS AFTER XEN 45 GEL STENT IMPLANTATION WITH PAIN AND LOSS OF VISION AND',
  24: '(B)(4). THE EVENTS OF VISION ABNORMALITIES, HIGH INTRAOCULAR PRESSURE, GLAUCOMA PROGRESSION, INFLAMMATION, IRITIS, HYPEREMIA, AND CORNEAL EDEMA ARE PHYSIOLOGICAL COMPLICATIONS AND ANALYSIS OF THE',
  25: 'HEALTH EFFECT - IMPACT CODES: (B)(4).',
  26: 'CORRECTED AND ADDITIONAL INFORMATION: B.5.',
  27: 'A CLINICAL STUDY PATIENT WITH AN IMPLANTED XEN 45 GEL STENT IN THE LEFT EYE EXPERIENCED THE EVENTS OF ANTERIOR CHAMBER INFLAMMATION, HYPEREMIA OF CONJUNCTIVA, AND CORNEAL EDEMA A FEW DAYS AFTER',
  28: 'ADDITIONAL INFORMATION WAS RECEIVED NOTING THE PATIENT ALSO EXPERIENCED AN EVENT OF MILD INTRAOCULAR PRESSURE IN THE LEFT EYE 40 DAYS AFTER THE IMPLANTATION. EVENT WAS TREATED WITH MEDICATION AND',
  29: 'IT WAS NOTED THAT THE PATIENT HAD A HISTORY OF AMETROPIA BINOCULAR. THE REPORTED EVENT OF AMETROPIA BINOCULAR IS NOT DEVICE RELATED. FURTHER INFORMATION WAS RECEIVED FURTHER DESCRIBING THE EVENT',
  30: 'FURTHER INFORMATION FROM THE REPORTER REGARDING EVENT, PRODUCT, AND PATIENT DETAILS HAS BEEN REQUESTED. NO ADDITIONAL INFORMATION IS AVAILABLE AT THIS TIME. THE EVENTS OF HIGH INTRAOCULAR PRESSURE',
  31: 'HEALTHCARE PROFESSIONAL REPORTED A XEN 45 GEL STENT PATIENT WHO RECENTLY HAD THE SURGERY IN AN UNKNOWN EYE HAD AN IOP OF 56 AND THE BLEB WAS NOT PRESENT.',
  32: 'FURTHER INFORMATION FROM THE REPORTER REGARDING PRODUCT AND PATIENT DETAILS HAS BEEN REQUESTED. NO ADDITIONAL INFORMATION IS AVAILABLE AT THIS TIME. THE EVENTS OF ENDOPHTHALMITIS, OCULAR PAIN AND',
  33: 'HEALTHCARE PROFESSIONAL REPORTED A PATIENT EXPERIENCED ENDOPHTHALMITIS AS THEY PRESENTED 6 MONTHS AFTER XEN 45 GEL STENT IMPLANTATION IN THEIR RIGHT EYE WITH PAIN, LOSS OF VISION AND FLOATERS AND',
  34: 'CORRECTED DATA: H.6. A REVIEW OF THE DEVICE HISTORY RECORD HAS BEEN COMPLETED. NO DEVIATIONS OR NON-CONFORMANCES NOTED.',
  35: 'ADDITIONAL INFORMATION: B.1., B.5., G.3., H.6.',
  36: 'THE EVENT OF DEVICE MIGRATION IS A PHYSIOLOGICAL COMPLICATION AND ANALYSIS OF THE DEVICE GENERALLY DOES NOT ASSIST ALLERGAN IN DETERMINING A PROBABLE CAUSE FOR THIS EVENT. A REVIEW OF THE DEVICE',
  37: MIGRATED,
  38: 'ADDITIONAL DETAILS WERE RECEIVED NOTING THAT DURING THE REVISION OF THE CONJUNCTIVA AN EXTRAOCULAR PIECE OF THE XEN BROKE OFF "WITHOUT SIGNIFICANT MANIPULATION". NO NEGATIVE CONSEQUENCES WERE',
  39: MIGRATED,
  40: 'DEVICE ANALYSIS: THE INJECTOR WAS RETURNED FOR ANALYSIS. THE SLIDER TRAVELLED THE FULL DISTANCE SMOOTHLY IN ALL THREE ANGLES. NEEDLE RETRACTED WITH THE SLIDER. NO FUNCTIONAL FAILURE WAS DETECTED',
  41: 'THE EVENT OF GEL STENT BLOCKAGE IS A PHYSIOLOGICAL COMPLICATION AND ANALYSIS OF THE DEVICE GENERALLY DOES NOT ASSIST ALLERGAN IN DETERMINING A PROBABLE CAUSE FOR THIS EVENT. MANUFACTURING RECORDS',
  42: NOT_PATENT,
  43: NOT_PATENT,
  44: 'ADDITIONAL INFORMATION.',
  45: '',
};

const RIBBON_TABS = ['Home', 'Insert', 'Page Layout', 'Formulas', 'Data', 'Review', 'View'];
const rowNumbers = Array.from({ length: 44 }, (_, i) => i + 2);

const SheetRow = ({ n }) => {
  const band = n % 2 === 0;
  const id = IDS[n];
  const isDesc = DESC.includes(n);
  const cover = COVER[n] ?? 13;
  return (
    <Row>
      <RowHead>{n}</RowHead>
      <Cell $w={COLS[0]} $band={band} $num $line>{id ? id[0] : ''}</Cell>
      <Cell $w={COLS[1]} $band={band} $clip={!isDesc} $over={isDesc} $line={!isDesc} $soft>
        {id ? 'Additional Manufacturer Narrative' : isDesc ? 'Description of Event or Problem' : ''}
      </Cell>
      {id
        ? <Flagged $w={COLS[2]} $band={band} $line>{id[1]}</Flagged>
        : <Cell $w={COLS[2]} $band={band} $line />}
      <LinkCell $w={COLS[3]} $band={band} $clip $line>
        {id ? `https://www.accessdata.fda.gov/scripts/cdrh/cfdocs/cfmaude/detail.cfm?mdrfoi__id=${id[1]}` : ''}
      </LinkCell>
      <TextCell $w={COLS[4]} $band={band} $over $line={cover === 0}>{TEXTS[n]}</TextCell>
      {EXTRA.map((c, i) => <BlankCell key={c} $line={i + 1 >= cover} />)}
    </Row>
  );
};

export default function App() {
  return (
    <Page>
      <GlobalStyle />
      <BlackBand />
      <TitleBar>
        <QuickTools>
          <QuickSlot $w={54}><HomeIcon /></QuickSlot>
          <QuickSlot $w={55}><SaveIcon /></QuickSlot>
          <QuickSlot $w={45}><UndoIcon /></QuickSlot>
          <QuickSlot $w={34}><Chev /></QuickSlot>
          <QuickSlot $w={53}><RedoIcon /></QuickSlot>
          <QuickSlot $w={57}><PrintIcon /></QuickSlot>
          <QuickSlot $w={30}><MoreIcon /></QuickSlot>
        </QuickTools>
        <DocTitle><ExcelIcon />MAUDEMetrics_2025-08-02_1747</DocTitle>
        <SearchArea>
          <SearchBox><SearchIcon />Search (Cmd + Ctrl + U)</SearchBox>
          <CollabIcon />
        </SearchArea>
      </TitleBar>

      <Ribbon>
        <RibbonTabs>
          <TabList>
            {RIBBON_TABS.map((t, i) => <RibbonTab key={t} $active={i === 0}>{t}</RibbonTab>)}
          </TabList>
          <ShareButton><ShareIcon />Share</ShareButton>
        </RibbonTabs>

        <ToolStrip>
          <Group $w={209} $pad={34}>
            <PasteBlock>
              <PasteTop><PasteIcon /><Chev /></PasteTop>
              <PasteLabel>Paste</PasteLabel>
            </PasteBlock>
            <MiniColumn>
              <MiniRow $inset={6}><CutIcon /></MiniRow>
              <MiniRow><CopyIcon /><Chev /></MiniRow>
              <MiniRow><PainterIcon /></MiniRow>
            </MiniColumn>
          </Group>

          <Group $w={541} $pad={21}>
            <Stack>
              <ToolRow>
                <Select $w={281} $gap={6}>Calibri<Chev /></Select>
                <Select $w={106}>12<Chev /></Select>
                <Tool $w={60}><LetterA $size={36}>A</LetterA><CaretSlot><Caret /></CaretSlot></Tool>
                <Tool $w={46}><LetterA $size={30}>A</LetterA><CaretSlot><Caret down /></CaretSlot></Tool>
              </ToolRow>
              <ToolRow>
                <Tool $w={48} $active><StyleLetter $bold>B</StyleLetter></Tool>
                <Tool $w={56}><StyleLetter $italic>I</StyleLetter></Tool>
                <Tool $w={48}><StyleLetter $under>U</StyleLetter></Tool>
                <Tool $w={26}><Chev /></Tool>
                <VSep $w={30} />
                <Tool $w={50}><BorderIcon /></Tool>
                <Tool $w={24}><Chev /></Tool>
                <VSep $w={34} />
                <Tool $w={49}><FillIcon /></Tool>
                <Tool $w={23}><Chev /></Tool>
                <Tool $w={56}><ColorA /></Tool>
                <Tool $w={18}><Chev /></Tool>
              </ToolRow>
            </Stack>
          </Group>

          <Group $w={401} $pad={20}>
            <Stack>
              <ToolRow>
                <Tool $w={52}><AlignV at={0} /></Tool>
                <Tool $w={48} $active><AlignV at={8} /></Tool>
                <Tool $w={56}><AlignV at={16} /></Tool>
                <VSep $w={26} />
                <Tool $w={56}><OrientIcon /></Tool>
                <Tool $w={16}><Chev /></Tool>
                <VSep $w={42} />
                <Tool $w={40}><RtlIcon /></Tool>
                <Tool $w={32}><Chev /></Tool>
              </ToolRow>
              <ToolRow>
                <Tool $w={52}><Lines rows={[[0, 28, 1], [0, 18, 10], [0, 28, 18], [0, 18, 27]]} /></Tool>
                <Tool $w={48} $active><Lines rows={[[0, 28, 1], [5, 23, 10], [0, 28, 18], [5, 23, 27]]} /></Tool>
                <Tool $w={56}><Lines rows={[[0, 28, 1], [10, 28, 10], [0, 28, 18], [10, 28, 27]]} /></Tool>
                <VSep $w={26} />
                <Tool $w={56}><Outdent /></Tool>
                <Tool $w={48}><Indent /></Tool>
              </ToolRow>
            </Stack>
          </Group>

          <Group $w={279} $pad={21}>
            <Stack>
              <ToolRow><Tool $w={44}><WrapIcon /></Tool><WideLabel $after={11}>Wrap Text</WideLabel><Chev /></ToolRow>
              <ToolRow><Tool $w={44}><MergeIcon /></Tool><WideLabel $after={10}>Merge &amp; Center</WideLabel><Chev /></ToolRow>
            </Stack>
          </Group>

          <Group $w={352} $pad={21}>
            <Stack>
              <ToolRow><Select $w={308}>General<Chev /></Select></ToolRow>
              <ToolRow>
                <Tool $w={44}><NumberGlyph $size={34}>$</NumberGlyph></Tool>
                <Tool $w={28}><Chev /></Tool>
                <Tool $w={54}><NumberGlyph $size={38}>%</NumberGlyph></Tool>
                <Tool $w={50}><CommaGlyph>,</CommaGlyph></Tool>
                <VSep $w={31} />
                <Tool $w={50}><DecIcon /></Tool>
                <Tool $w={54}><DecIcon more /></Tool>
              </ToolRow>
            </Stack>
          </Group>

          <Group $w={364} $pad={24}>
            <BigTool $w={114}>
              <BigIconRow $gap={14}><CondIcon /><Chev /></BigIconRow>
              <BigLabel>Conditional<br />Formatting</BigLabel>
            </BigTool>
            <BigTool $w={114}>
              <BigIconRow><TableIcon /><Chev /></BigIconRow>
              <BigLabel>Format<br />as Table</BigLabel>
            </BigTool>
            <BigTool $w={90}>
              <BigIconRow><CellIcon /><Chev /></BigIconRow>
              <BigLabel>Cell<br />Styles</BigLabel>
            </BigTool>
          </Group>

          <Group $w={338} $pad={18}>
            <BigTool $w={100}>
              <BigIconRow><InsertIcon /><Chev /></BigIconRow>
              <BigLabel>Insert</BigLabel>
            </BigTool>
            <BigTool $w={102}>
              <BigIconRow><DeleteIcon /><Chev /></BigIconRow>
              <BigLabel>Delete</BigLabel>
            </BigTool>
            <BigTool $w={100}>
              <BigIconRow><FormatIcon /><Chev /></BigIconRow>
              <BigLabel>Format</BigLabel>
            </BigTool>
          </Group>

          <Group $w={310} $pad={22}>
            <EditColumn>
              <EditRow><SigmaIcon /><Chev /></EditRow>
              <EditRow><FillDownIcon /><Chev /></EditRow>
              <EditRow><ClearIcon /><Chev /></EditRow>
            </EditColumn>
            <BigTool $w={100}>
              <BigIconRow><SortIcon /><Chev /></BigIconRow>
              <BigLabel>Sort &amp;<br />Filter</BigLabel>
            </BigTool>
            <BigTool $w={98}>
              <BigIconRow><FindIcon /><Chev /></BigIconRow>
              <BigLabel>Find &amp;<br />Select</BigLabel>
            </BigTool>
          </Group>

          <Group $w={147} $pad={14} $last>
            <BigTool $w={100}>
              <BigIconRow><AddinsIcon /></BigIconRow>
              <BigLabel>Add-ins</BigLabel>
            </BigTool>
          </Group>
        </ToolStrip>
      </Ribbon>

      <FormulaBar>
        <NameBox>A1<StepArrows /></NameBox>
        <FormulaActions><CrossIcon /><CheckIcon /><FxMark>fx</FxMark></FormulaActions>
        <FormulaInput>event_id</FormulaInput>
        <FormulaEnd><NavArrowDown /></FormulaEnd>
      </FormulaBar>

      <SheetArea>
        <Sheet>
          <HeaderRow>
            <Corner><CornerMark /></Corner>
            <ColHead $w={COLS[0]} $selected>A</ColHead>
            <ColHead $w={COLS[1]}>B</ColHead>
            <ColHead $w={COLS[2]}>C</ColHead>
            <ColHead $w={COLS[3]}>D</ColHead>
            <ColHead $w={COLS[4]}>E</ColHead>
            {EXTRA.map(c => <ColHead key={c} $w={106}>{c}</ColHead>)}
          </HeaderRow>
          <Row>
            <RowHead $selected>1</RowHead>
            <ActiveCell $w={COLS[0]}>event_id</ActiveCell>
            <HeadCell $w={COLS[1]} $line $soft>text_type_code</HeadCell>
            <HeadCell $w={COLS[2]} $line>mdr_report_key</HeadCell>
            <HeadCell $w={COLS[3]} $line>maude_report_link</HeadCell>
            <HeadCell $w={COLS[4]} $line $soft>text</HeadCell>
            {EXTRA.map(c => <BlankCell key={c} $first $line />)}
          </Row>
          {rowNumbers.map(n => <SheetRow key={n} n={n} />)}
        </Sheet>
        <VScroll><VThumb /></VScroll>
      </SheetArea>

      <HScroll><HThumb /></HScroll>

      <SheetTabs>
        <NavArrows><NavArrow /><NavArrow right /></NavArrows>
        <TabSlot><SheetTab $w={192} $bg="#3871b8">Raw_Events</SheetTab></TabSlot>
        <TabSlot $active><ActiveTab><ActiveTabFace>MDR_Texts</ActiveTabFace></ActiveTab></TabSlot>
        <TabSlot><SheetTab $w={234} $bg="#55ab68">Custom_Events</SheetTab></TabSlot>
        <TabSlot><SheetTab $w={160} $bg="#8547a8">Summary</SheetTab></TabSlot>
        <AddSheet><PlusIcon /></AddSheet>
      </SheetTabs>

      <StatusBar>
        <StatusLeft>
          Ready
          <StatusItem $left={40}><A11yIcon />Accessibility: Good to go</StatusItem>
        </StatusLeft>
        <StatusRight>
          <ViewButton $w={74} $active><NormalView /></ViewButton>
          <ViewButton $w={70}><PageView /></ViewButton>
          <ViewButton $w={71}><BreakView /></ViewButton>
          <ViewButton $w={33} $end><MinusIcon /></ViewButton>
          <ZoomTrack><ZoomThumb /></ZoomTrack>
          <ZoomPlus />
          <ZoomValue>100%</ZoomValue>
        </StatusRight>
      </StatusBar>
    </Page>
  );
}
